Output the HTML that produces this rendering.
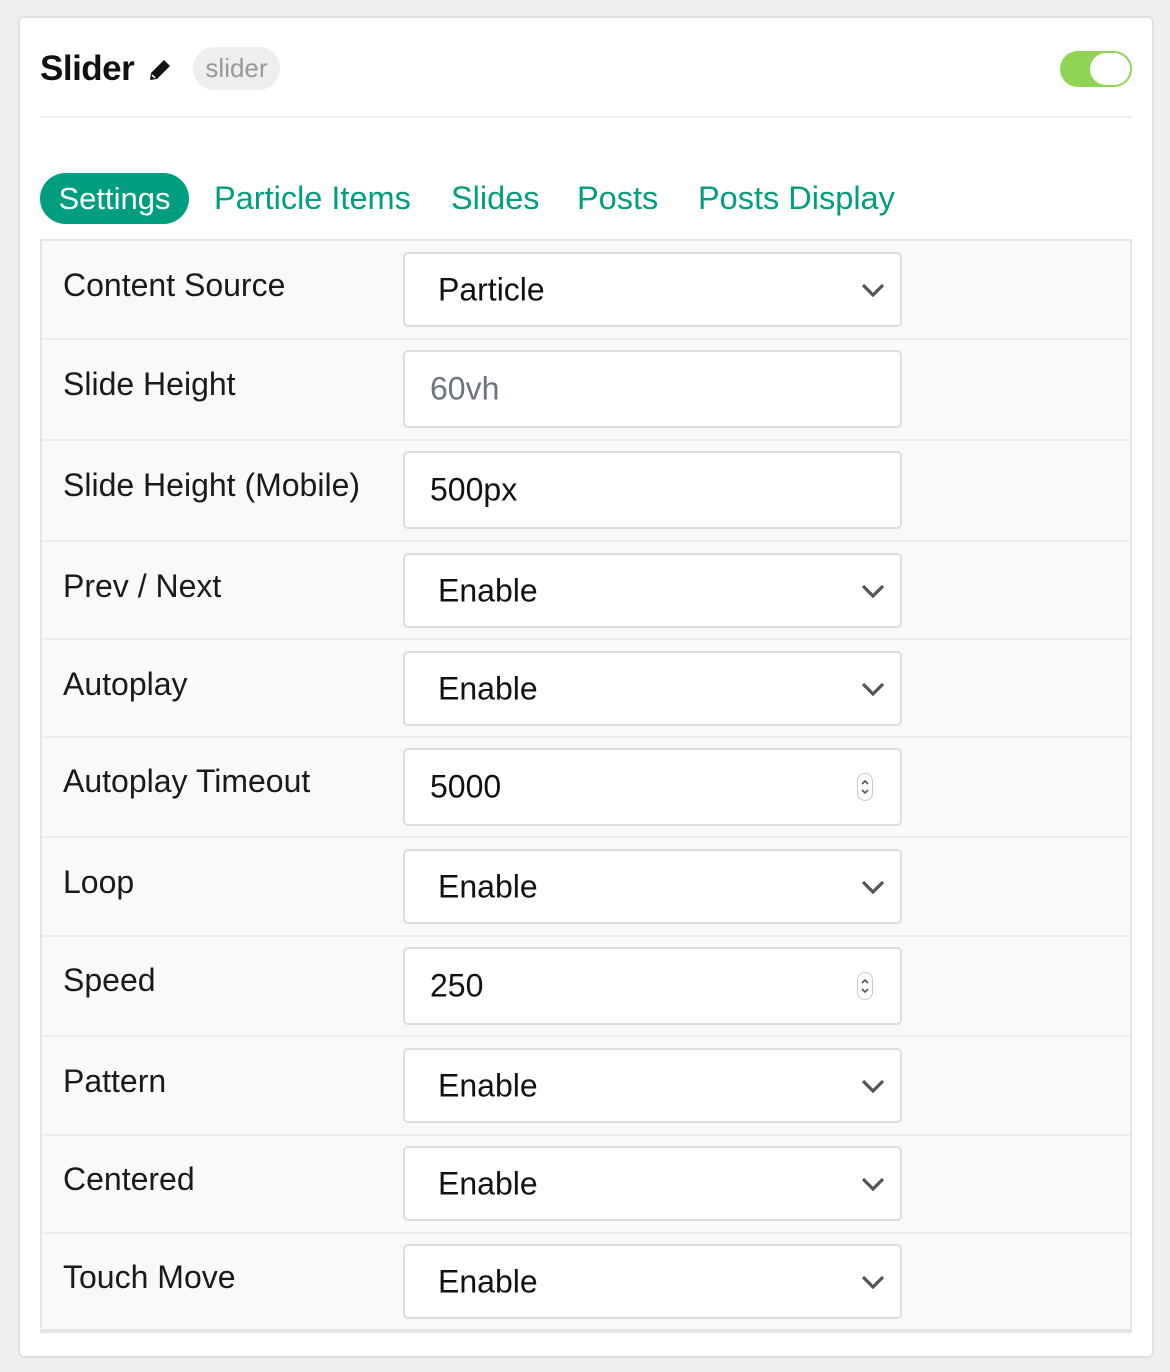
<!DOCTYPE html>
<html><head><meta charset="utf-8"><style>
*{box-sizing:border-box;margin:0;padding:0}
body{width:1170px;height:1372px;background:#efefef;font-family:"Liberation Sans",sans-serif;position:relative;overflow:hidden}
.card{position:absolute;left:18px;top:16px;width:1136px;height:1342px;background:#fff;border:2px solid #e0e0e0;border-radius:6px}
.abs{position:absolute}
.title{left:40px;top:48px;font-size:35px;font-weight:bold;color:#111;line-height:42px;letter-spacing:-0.5px}
.pill{left:193px;top:47px;width:87px;height:43px;border-radius:22px;background:#eee;color:#999;font-size:26px;line-height:43px;text-align:center}
.tog{left:1060px;top:51px;width:72px;height:36px;border-radius:18px;background:#8fd454}
.knob{position:absolute;right:2px;top:2px;width:40px;height:32px;border-radius:16px;background:#fff}
.hr{left:40px;top:116px;width:1092px;height:2px;background:#eee}
.tab{top:173px;height:51px;line-height:51px;font-size:32.5px;color:#009e80}
.tab.on{background:#009e80;color:#fff;border-radius:26px;left:40px;width:149px;text-align:center;font-size:31px}
.tbl{left:40px;top:239px;width:1092px;height:1094px;background:#f9f9f9;border:2px solid #e6e6e6;border-bottom:4px solid #e3e3e3}
.row{position:absolute;left:0;width:1088px;border-bottom:2px solid #ececec}
.lab{position:absolute;left:21px;font-size:32px;color:#1a1a1a;line-height:36px}
.ctl{position:absolute;left:361px;width:499px;background:#fff;border:2px solid #ddd;border-radius:5px;font-size:32px;color:#111}
.ctl span{position:absolute;top:50%;transform:translateY(-50%)}
.chev{position:absolute;right:15px;top:50%;margin-top:-8px}
.spin{position:absolute;right:27px;top:50%;margin-top:-14px;width:16px;height:28px;border:1px solid #ccc;border-radius:8px}
</style></head><body>
<div class="card"></div>
<div class="abs title">Slider</div>
<svg class="abs" style="left:148px;top:58px" width="24" height="24" viewBox="0 0 24 24"><path d="M16 2l6 6-13 13-6-6z" fill="#111"/><path d="M3 15l6 6-7 1z" fill="#111"/><path d="M4 17l3 3" stroke="#fff" stroke-width="1.5"/></svg>
<div class="abs pill">slider</div>
<div class="abs tog"><div class="knob"></div></div>
<div class="abs hr"></div>
<div class="abs tab on">Settings</div>
<div class="abs tab" style="left:214px">Particle Items</div>
<div class="abs tab" style="left:451px">Slides</div>
<div class="abs tab" style="left:577px">Posts</div>
<div class="abs tab" style="left:698px">Posts Display</div>
<div class="abs tbl">
<div class="row" style="top:0;height:99px"><div class="lab" style="top:26px">Content Source</div><div class="ctl" style="top:11px;height:75px"><span style="left:33px">Particle</span><svg class="chev" width="24" height="16" viewBox="0 0 24 16"><path d="M2 3l10 10 10-10" fill="none" stroke="#555" stroke-width="3.2"/></svg></div></div>
<div class="row" style="top:99px;height:101px"><div class="lab" style="top:26px">Slide Height</div><div class="ctl" style="top:10px;height:78px"><span style="left:25px;color:#6c737a">60vh</span></div></div>
<div class="row" style="top:200px;height:101px"><div class="lab" style="top:26px">Slide Height (Mobile)</div><div class="ctl" style="top:10px;height:78px"><span style="left:25px">500px</span></div></div>
<div class="row" style="top:301px;height:98px"><div class="lab" style="top:26px">Prev / Next</div><div class="ctl" style="top:11px;height:75px"><span style="left:33px">Enable</span><svg class="chev" width="24" height="16" viewBox="0 0 24 16"><path d="M2 3l10 10 10-10" fill="none" stroke="#555" stroke-width="3.2"/></svg></div></div>
<div class="row" style="top:399px;height:98px"><div class="lab" style="top:26px">Autoplay</div><div class="ctl" style="top:11px;height:75px"><span style="left:33px">Enable</span><svg class="chev" width="24" height="16" viewBox="0 0 24 16"><path d="M2 3l10 10 10-10" fill="none" stroke="#555" stroke-width="3.2"/></svg></div></div>
<div class="row" style="top:497px;height:100px"><div class="lab" style="top:25px">Autoplay Timeout</div><div class="ctl" style="top:10px;height:78px"><span style="left:25px">5000</span><div class="spin"><svg width="14" height="26" viewBox="0 0 14 26" style="position:absolute;left:0;top:0"><path d="M4 10l3-3 3 3M4 16l3 3 3-3" fill="none" stroke="#555" stroke-width="1.6"/></svg></div></div></div>
<div class="row" style="top:597px;height:99px"><div class="lab" style="top:26px">Loop</div><div class="ctl" style="top:11px;height:75px"><span style="left:33px">Enable</span><svg class="chev" width="24" height="16" viewBox="0 0 24 16"><path d="M2 3l10 10 10-10" fill="none" stroke="#555" stroke-width="3.2"/></svg></div></div>
<div class="row" style="top:696px;height:100px"><div class="lab" style="top:25px">Speed</div><div class="ctl" style="top:10px;height:78px"><span style="left:25px">250</span><div class="spin"><svg width="14" height="26" viewBox="0 0 14 26" style="position:absolute;left:0;top:0"><path d="M4 10l3-3 3 3M4 16l3 3 3-3" fill="none" stroke="#555" stroke-width="1.6"/></svg></div></div></div>
<div class="row" style="top:796px;height:99px"><div class="lab" style="top:26px">Pattern</div><div class="ctl" style="top:11px;height:75px"><span style="left:33px">Enable</span><svg class="chev" width="24" height="16" viewBox="0 0 24 16"><path d="M2 3l10 10 10-10" fill="none" stroke="#555" stroke-width="3.2"/></svg></div></div>
<div class="row" style="top:895px;height:98px"><div class="lab" style="top:25px">Centered</div><div class="ctl" style="top:10px;height:75px"><span style="left:33px">Enable</span><svg class="chev" width="24" height="16" viewBox="0 0 24 16"><path d="M2 3l10 10 10-10" fill="none" stroke="#555" stroke-width="3.2"/></svg></div></div>
<div class="row" style="top:993px;height:98px;border-bottom:none"><div class="lab" style="top:25px">Touch Move</div><div class="ctl" style="top:10px;height:75px"><span style="left:33px">Enable</span><svg class="chev" width="24" height="16" viewBox="0 0 24 16"><path d="M2 3l10 10 10-10" fill="none" stroke="#555" stroke-width="3.2"/></svg></div></div>
</div>
</body></html>
